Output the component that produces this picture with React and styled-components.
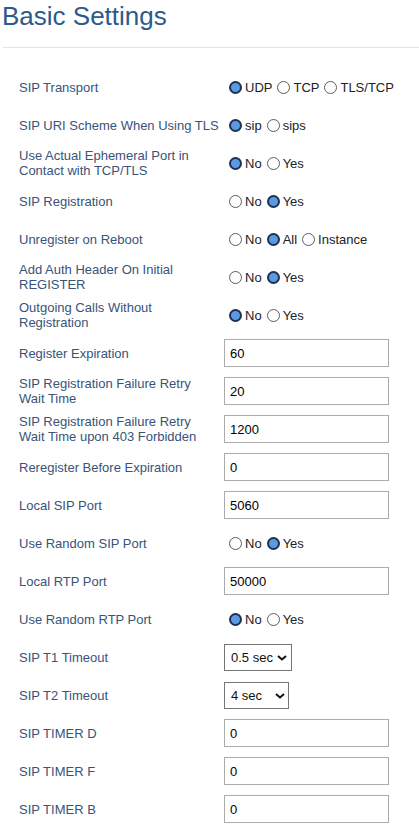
import React from "react";
import styled, { createGlobalStyle } from "styled-components";

const Global = createGlobalStyle`
  html, body { margin: 0; padding: 0; background: #fff; }
  body { font-family: "Liberation Sans", Arial, sans-serif; }
  * { box-sizing: border-box; }
`;

const Page = styled.div`
  width: 419px;
  background: #fff;
`;

const Header = styled.header`
  padding: 1px 0 0 2px;
  height: 47px;
`;

const Title = styled.h1`
  margin: 0;
  font-family: "Liberation Sans", Arial, sans-serif;
  font-weight: normal;
  font-size: 26px;
  line-height: 30px;
  color: #2c5a8c;
`;

const Divider = styled.hr`
  margin: 0 0 0 3px;
  border: 0;
  height: 1px;
  background: #e3e3e3;
`;

const Form = styled.div`
  padding: 20px 0 0 19px;
  display: flex;
  flex-direction: column;
`;

const Row = styled.div`
  display: grid;
  grid-template-columns: 201px 1fr;
  column-gap: 4px;
  align-items: center;
  height: 38px;
`;

const Label = styled.div`
  font-size: 13px;
  line-height: 15px;
  color: #38537a;
  white-space: pre-line;
`;

const Options = styled.div`
  display: flex;
  align-items: center;
  font-size: 13px;
  color: #222;
`;

const Option = styled.label`
  display: inline-flex;
  align-items: center;
  line-height: 15px;
`;

const Radio = styled.input.attrs({ type: "radio" })`
  appearance: none;
  -webkit-appearance: none;
  flex: none;
  width: 13px;
  height: 13px;
  margin: 0 3px 0 5px;
  border-radius: 50%;
  border: 1px solid #5c5c5c;
  background: #fff;
  &:checked {
    border: 2px solid #1d3250;
    background: #5b99e0;
  }
`;

const TextInput = styled.input.attrs({ type: "text" })`
  width: 165px;
  height: 28px;
  margin: 0;
  padding: 0 0 0 5px;
  border: 1px solid #ababab;
  border-radius: 0;
  font-family: "Liberation Sans", Arial, sans-serif;
  font-size: 13px;
  color: #000;
  background: #fff;
  outline: none;
`;

const SelectWrap = styled.div`
  position: relative;
  width: ${(p) => p.$w}px;
  height: 27px;
`;

const Select = styled.select`
  appearance: none;
  -webkit-appearance: none;
  width: 100%;
  height: 100%;
  margin: 0;
  padding: 0 0 0 6px;
  border: 1px solid #767676;
  border-radius: 0;
  background: #fff;
  font-family: "Liberation Sans", Arial, sans-serif;
  font-size: 13px;
  color: #111;
  outline: none;
`;

const Chevron = styled.svg`
  position: absolute;
  right: ${(p) => p.$r}px;
  top: 11px;
  pointer-events: none;
`;

const rows = [
  { label: "SIP Transport", radio: ["UDP", "TCP", "TLS/TCP"], value: 0 },
  { label: "SIP URI Scheme When Using TLS", radio: ["sip", "sips"], value: 0 },
  { label: "Use Actual Ephemeral Port in\nContact with TCP/TLS", radio: ["No", "Yes"], value: 0 },
  { label: "SIP Registration", radio: ["No", "Yes"], value: 1 },
  { label: "Unregister on Reboot", radio: ["No", "All", "Instance"], value: 1 },
  { label: "Add Auth Header On Initial\nREGISTER", radio: ["No", "Yes"], value: 1 },
  { label: "Outgoing Calls Without\nRegistration", radio: ["No", "Yes"], value: 0 },
  { label: "Register Expiration", text: "60" },
  { label: "SIP Registration Failure Retry\nWait Time", text: "20" },
  { label: "SIP Registration Failure Retry\nWait Time upon 403 Forbidden", text: "1200" },
  { label: "Reregister Before Expiration", text: "0" },
  { label: "Local SIP Port", text: "5060" },
  { label: "Use Random SIP Port", radio: ["No", "Yes"], value: 1 },
  { label: "Local RTP Port", text: "50000" },
  { label: "Use Random RTP Port", radio: ["No", "Yes"], value: 0 },
  { label: "SIP T1 Timeout", select: ["0.5 sec", "1 sec", "2 sec"], width: 68, chev: 5 },
  { label: "SIP T2 Timeout", select: ["4 sec", "8 sec", "16 sec"], width: 65, chev: 4 },
  { label: "SIP TIMER D", text: "0" },
  { label: "SIP TIMER F", text: "0" },
  { label: "SIP TIMER B", text: "0" },
];

function Control({ row, idx }) {
  if (row.radio) {
    return (
      <Options>
        {row.radio.map((o, i) => (
          <Option key={o}>
            <Radio name={`r${idx}`} defaultChecked={i === row.value} />
            {o}
          </Option>
        ))}
      </Options>
    );
  }
  if (row.select) {
    return (
      <SelectWrap $w={row.width}>
        <Select defaultValue={row.select[0]}>
          {row.select.map((o) => (
            <option key={o}>{o}</option>
          ))}
        </Select>
        <Chevron $r={row.chev} width="10" height="6" viewBox="0 0 10 6">
          <path d="M1 1 L5 4.5 L9 1" fill="none" stroke="#111" strokeWidth="2" />
        </Chevron>
      </SelectWrap>
    );
  }
  return <TextInput defaultValue={row.text} />;
}

export default function App() {
  return (
    <Page>
      <Global />
      <Header>
        <Title>Basic Settings</Title>
      </Header>
      <Divider />
      <Form>
        {rows.map((r, i) => (
          <Row key={r.label}>
            <Label>{r.label}</Label>
            <div>
              <Control row={r} idx={i} />
            </div>
          </Row>
        ))}
      </Form>
    </Page>
  );
}
